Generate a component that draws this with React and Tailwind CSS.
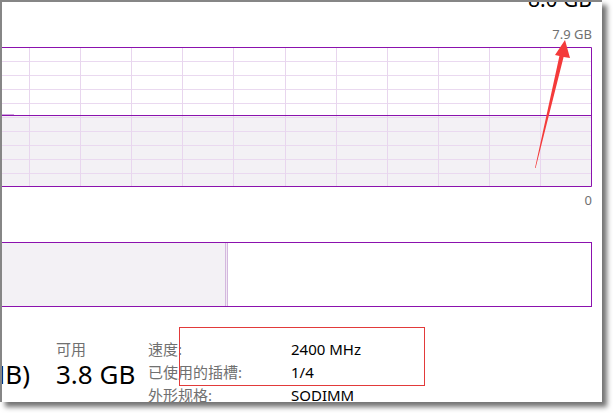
const PURPLE = "#8b12ae";

function MemoryGraph() {
  // vertical grid lines every ~51px, horizontal every 14px
  const cols = Array.from({ length: 11 }, (_, i) => Math.round(27 + 51.1 * i) + 0.5);
  const rows = Array.from({ length: 9 }, (_, i) => 14 * (i + 1) + 0.5);

  return (
    <svg width="590" height="140" viewBox="0 0 590 140" className="block">
      <rect x="0" y="69" width="589" height="70" fill="#f3f1f5" />
      {rows.map((y) => (
        <line key={y} x1="0" x2="589" y1={y} y2={y} stroke="#ead9f0" />
      ))}
      {cols.map((x) => (
        <line key={x} x1={x} x2={x} y1="1" y2="139" stroke="#e8d6ee" />
      ))}
      <line x1="0" x2="12" y1="67.5" y2="67.5" stroke="#cfa6dd" />
      <line x1="0" x2="589" y1="68.5" y2="68.5" stroke={PURPLE} />
      <path d="M0 0.5 H589.5 V139.5 H0" fill="none" stroke={PURPLE} />
    </svg>
  );
}

function Arrow() {
  return (
    <svg
      width="613"
      height="413"
      viewBox="0 0 613 413"
      className="absolute left-0 top-0 pointer-events-none"
    >
      <polygon
        points="565,40 570,58 563.6,57 535.6,168 535,168 559.4,56 555,55"
        fill="#f43a3a"
      />
    </svg>
  );
}

export default function App() {
  return (
    <div className="relative w-[613px] h-[413px] bg-white overflow-hidden font-['Noto_Sans','Noto_Sans_CJK_SC',sans-serif]">
      <div className="w-[602px] h-[402px] bg-white border-l-2 border-t-2 border-[#868686] shadow-[5px_5px_5px_rgba(0,0,0,0.55)] overflow-hidden">
        <div className="flex flex-col pr-[10px]">
          {/* Totals */}
          <p className="-mt-[13px] self-end text-[21px] leading-[21px] text-black">8.0 GB</p>
          <p className="mt-[16px] self-end text-[13px] leading-[16px] text-[#707070]">7.9 GB</p>

          {/* Usage graph */}
          <div className="mt-[5px]">
            <MemoryGraph />
          </div>
          <p className="mt-[5px] self-end text-[13px] leading-[16px] text-[#707070]">0</p>

          {/* Composition bar */}
          <div className="mt-[34px] h-[65px] flex border-y border-r border-[#8b12ae]">
            <div className="w-[223px] bg-[#f3f1f5]" />
            <div className="w-px bg-[#d4b8de]" />
            <div className="w-px bg-[#f1e9f4]" />
            <div className="w-px bg-[#d4b8de]" />
            <div className="flex-1 bg-white" />
          </div>

          {/* Stats */}
          <div className="mt-[31px] flex items-start text-[15px] leading-[23px]">
            <div className="w-[28px] shrink-0 flex flex-col items-end whitespace-nowrap">
              <span className="text-[#707070]">&nbsp;</span>
              <span className="text-[26px] leading-[26px] text-black">3.9 GB (105 MB)</span>
            </div>
            <div className="ml-[26px] w-[92px] shrink-0 flex flex-col whitespace-nowrap">
              <span className="text-[#707070]">可用</span>
              <span className="text-[26px] leading-[26px] text-black">3.8 GB</span>
            </div>
            <div className="grid grid-cols-[143px_auto] whitespace-nowrap">
              <span className="text-[#707070]">速度:</span>
              <span className="text-black">2400 MHz</span>
              <span className="text-[#707070]">已使用的插槽:</span>
              <span className="text-black">1/4</span>
              <span className="text-[#707070]">外形规格:</span>
              <span className="text-black">SODIMM</span>
            </div>
          </div>
        </div>
      </div>

      {/* Annotations */}
      <div className="absolute left-[179px] top-[327px] w-[246px] h-[59px] border border-[#e23a3a]" />
      <Arrow />
    </div>
  );
}
